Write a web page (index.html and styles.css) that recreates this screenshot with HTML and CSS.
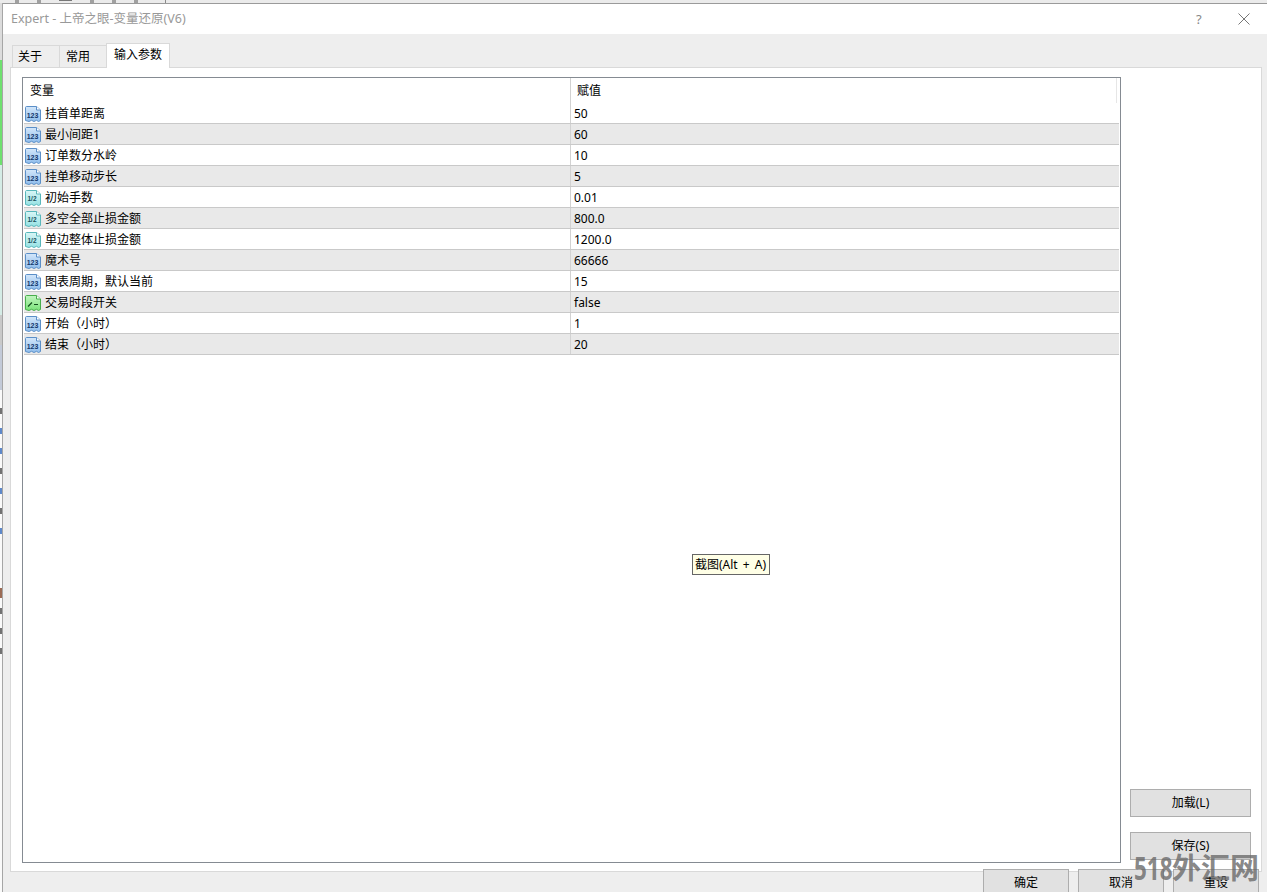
FILE: index.html
```html
<!DOCTYPE html>
<html lang="zh">
<head>
<meta charset="utf-8">
<title>Expert</title>
<link rel="stylesheet" href="styles.css">
</head>
<body>
<svg class="defs" width="0" height="0" aria-hidden="true">
  <defs>
    <linearGradient id="fInt" x1="0" y1="0" x2="0" y2="1"><stop offset="0" stop-color="#d4e7fa"/><stop offset="1" stop-color="#8fbdec"/></linearGradient>
    <linearGradient id="fDbl" x1="0" y1="0" x2="0" y2="1"><stop offset="0" stop-color="#d9f6f6"/><stop offset="1" stop-color="#96e2e4"/></linearGradient>
    <linearGradient id="fBool" x1="0" y1="0" x2="0" y2="1"><stop offset="0" stop-color="#c2f5c0"/><stop offset="1" stop-color="#79e379"/></linearGradient>
  </defs>
  <symbol id="doc" viewBox="0 0 16 16">
    <path d="M.5 1.5C.5 .9 1 .5 1.5 .5H11.5L15.5 4V14.5L13.5 15.5L11.5 14.3L9 15.5L6.5 14.3L4 15.5L.5 14.5Z" fill="var(--fill)" stroke="var(--edge)"/>
    <path d="M11.5 .5V4H15.5" fill="#fff" stroke="var(--edge)"/>
  </symbol>
</svg>
<div class="desktop">
  <div class="behind-top">
    <i class="bit"></i><i class="bit"></i><i class="bit dots"></i><i class="bit"></i><i class="bit"></i><i class="bit"></i><i class="rule"></i>
  </div>
  <div class="main">
    <div class="behind-left">
      <i class="seg top"></i><i class="seg g"></i><i class="seg p"></i><i class="seg e"></i><i class="seg w"></i>
      <i class="mark d m1"></i><i class="mark b"></i><i class="mark b"></i><i class="mark d"></i><i class="mark b"></i><i class="mark d"></i><i class="mark b"></i>
      <i class="mark r m2"></i><i class="mark d"></i><i class="mark d"></i><i class="mark d"></i>
    </div>
    <div class="window">
      <header class="titlebar">
        <span class="title">Expert - 上帝之眼-变量还原(V6)</span>
        <span class="help">?</span>
        <svg class="close" width="12" height="12" viewBox="0 0 12 12"><path d="M.5 .5L11.5 11.5M11.5 .5L.5 11.5" stroke="#777" fill="none"/></svg>
      </header>
      <div class="client">
        <nav class="tabs">
          <span class="tab">关于</span>
          <span class="tab">常用</span>
          <span class="tab active">输入参数</span>
        </nav>
        <section class="pane">
          <div class="table">
            <div class="row head"><div class="name">变量</div><div class="value">赋值</div></div>
            <div class="row"><div class="name"><svg class="ico int"><use href="#doc"/><text x="7.5" y="11.5">123</text></svg>挂首单距离</div><div class="value">50</div></div>
            <div class="row"><div class="name"><svg class="ico int"><use href="#doc"/><text x="7.5" y="11.5">123</text></svg>最小间距1</div><div class="value">60</div></div>
            <div class="row"><div class="name"><svg class="ico int"><use href="#doc"/><text x="7.5" y="11.5">123</text></svg>订单数分水岭</div><div class="value">10</div></div>
            <div class="row"><div class="name"><svg class="ico int"><use href="#doc"/><text x="7.5" y="11.5">123</text></svg>挂单移动步长</div><div class="value">5</div></div>
            <div class="row"><div class="name"><svg class="ico dbl"><use href="#doc"/><text x="7" y="11">1/2</text></svg>初始手数</div><div class="value">0.01</div></div>
            <div class="row"><div class="name"><svg class="ico dbl"><use href="#doc"/><text x="7" y="11">1/2</text></svg>多空全部止损金额</div><div class="value">800.0</div></div>
            <div class="row"><div class="name"><svg class="ico dbl"><use href="#doc"/><text x="7" y="11">1/2</text></svg>单边整体止损金额</div><div class="value">1200.0</div></div>
            <div class="row"><div class="name"><svg class="ico int"><use href="#doc"/><text x="7.5" y="11.5">123</text></svg>魔术号</div><div class="value">66666</div></div>
            <div class="row"><div class="name"><svg class="ico int"><use href="#doc"/><text x="7.5" y="11.5">123</text></svg>图表周期，默认当前</div><div class="value">15</div></div>
            <div class="row"><div class="name"><svg class="ico bool"><use href="#doc"/><path d="M3 11.5L7 7.5M9 9.5H13" fill="none" stroke="#14501e" stroke-width="1.2"/></svg>交易时段开关</div><div class="value">false</div></div>
            <div class="row"><div class="name"><svg class="ico int"><use href="#doc"/><text x="7.5" y="11.5">123</text></svg>开始（小时）</div><div class="value">1</div></div>
            <div class="row"><div class="name"><svg class="ico int"><use href="#doc"/><text x="7.5" y="11.5">123</text></svg>结束（小时）</div><div class="value">20</div></div>
          </div>
          <div class="side">
            <button class="btn side-btn">加载(L)</button>
            <button class="btn side-btn">保存(S)</button>
          </div>
        </section>
        <footer class="footer">
          <button class="btn foot-btn">确定</button>
          <button class="btn foot-btn">取消</button>
          <button class="btn foot-btn">重设</button>
        </footer>
      </div>
    </div>
  </div>
  <div class="tooltip">截图(Alt + A)</div>
  <div class="watermark"><span class="wm-num">518</span>外汇网</div>
</div>
</body>
</html>
```
FILE: styles.css
```css
* { box-sizing: border-box; }
html, body { margin: 0; padding: 0; }
body {
  width: 1267px;
  height: 892px;
  overflow: hidden;
  background: #e4e4e4;
  font: 12px/16px "Noto Sans", "Noto Sans CJK SC", sans-serif;
  color: #000;
}
.defs { position: absolute; }
.desktop {
  position: relative;
  display: flex;
  flex-direction: column;
  width: 1267px;
  height: 892px;
  overflow: hidden;
}
.behind-top {
  display: flex;
  flex: none;
  gap: 18px;
  height: 3px;
  padding-left: 15px;
  background: #ebebeb;
}
.bit { display: block; width: 4px; height: 3px; background: #a0a0a0; }
.bit.dots { width: 13px; height: 1px; background: #777; }
.rule { display: block; width: 1px; height: 3px; margin-left: 9px; background: #8a8a8a; }
.main { flex: 1; display: flex; min-height: 0; }
.behind-left {
  width: 3px;
  flex: none;
  display: flex;
  flex-direction: column;
  background: #fafafa;
  border-right: 1px solid #a6a6a6;
}
.seg { display: block; flex: none; }
.seg.top { height: 57px; background: #dcdcdc; }
.seg.g { height: 105px; background: #6fe06f; }
.seg.p { height: 150px; background: #d5ece6; }
.seg.e { height: 30px; background: #c9c9c9; }
.seg.w { height: 45px; background: #c3cad8; }
.mark { display: block; flex: none; width: 2px; height: 6px; margin-bottom: 14px; opacity: .75; }
.mark.d { background: #444; }
.mark.b { background: #2a62b8; }
.mark.r { background: #7a3a1c; height: 10px; margin-bottom: 10px; }
.m1 { margin-top: 18px; }
.m2 { margin-top: 40px; }
.window { flex: 1; display: flex; flex-direction: column; border-top: 1px solid #9a9a9a; }
.titlebar {
  display: flex;
  align-items: center;
  height: 30px;
  flex: none;
  padding-left: 8px;
  background: #fff;
  color: #999;
  font-size: 12.5px;
}
.title { flex: 1; }
.help { width: 12px; margin-right: 31px; color: #888; font-size: 13px; padding-left: 1px; }
.close { margin-right: 17px; }
.client { flex: 1; display: flex; flex-direction: column; background: #eee; padding: 9px 0 0 7px; min-height: 0; }
.tabs { display: flex; align-items: flex-end; height: 24px; flex: none; padding-left: 2px; }
.tab {
  width: 48px;
  height: 22px;
  padding: 2px 0 0 6px;
  border: 1px solid #d9d9d9;
  border-bottom: 0;
  margin-right: -1px;
  background: #eee;
  line-height: 17px;
}
.tab:first-child { padding-left: 5px; }
.tab.active {
  position: relative;
  width: 64px;
  height: 25px;
  margin-bottom: -1px;
  margin-right: 0;
  padding: 2px 0 0 7px;
  background: #fff;
}
.pane {
  display: flex;
  gap: 9px;
  width: 1252px;
  height: 805px;
  flex: none;
  padding: 9px 0 8px 11px;
  background: #fff;
  border: 1px solid #d9d9d9;
}
.table { width: 1099px; height: 786px; flex: none; padding: 0 1px; border: 1px solid #858b92; background: #fff; }
.row { display: flex; height: 21px; border-bottom: 1px solid #c9c9c9; line-height: 22px; }
.row:nth-child(odd):not(.head) { background: #e9e9e9; }
.row.head { height: 25px; border-bottom: 0; line-height: 26px; }
.name { display: flex; align-items: flex-start; width: 546px; flex: none; white-space: nowrap; }
.head .name { padding-left: 6px; }
.value { flex: 1; padding-left: 3px; border-left: 1px solid #d2d2d2; }
.head .value { padding-left: 6px; margin-right: 2px; border-right: 1px solid #e6e6e6; }
.ico { width: 16px; height: 16px; margin: 3px 4px 0 1px; flex: none; overflow: visible; }
.ico text { font: 700 7px "Liberation Sans", sans-serif; text-anchor: middle; fill: #13386b; }
.int { --fill: url(#fInt); --edge: #5b8fc8; }
.dbl { --fill: url(#fDbl); --edge: #58b7bb; }
.dbl text { font-size: 6.5px; font-weight: 700; fill: #17505c; }
.bool { --fill: url(#fBool); --edge: #48ae4c; }
.side { display: flex; flex-direction: column; justify-content: flex-end; gap: 15px; padding-bottom: 3px; }
.btn {
  font: inherit;
  color: #000;
  background: #e1e1e1;
  border: 1px solid #adadad;
  padding: 0;
  border-radius: 0;
}
.side-btn { width: 121px; height: 28px; }
.footer { position: relative; display: flex; gap: 9px; justify-content: flex-end; margin-top: -3px; padding-right: 8px; }
.foot-btn { width: 86px; height: 28px; flex: none; }
.tooltip {
  position: absolute;
  left: 692px;
  top: 554px;
  width: 78px;
  height: 21px;
  padding-left: 2px;
  border: 1px solid #666;
  background: #ffffe6;
  line-height: 19px;
  word-spacing: 2px;
  white-space: nowrap;
}
.watermark {
  position: absolute;
  left: 1134px;
  top: 849px;
  display: flex;
  align-items: center;
  font: 700 29px/38px "Noto Sans", "Noto Sans CJK SC", sans-serif;
  color: rgba(105, 105, 105, .8);
  white-space: nowrap;
}
.wm-num {
  display: block;
  width: 38px;
  font-size: 33px;
  transform: scaleX(.68);
  transform-origin: left center;
}
```
